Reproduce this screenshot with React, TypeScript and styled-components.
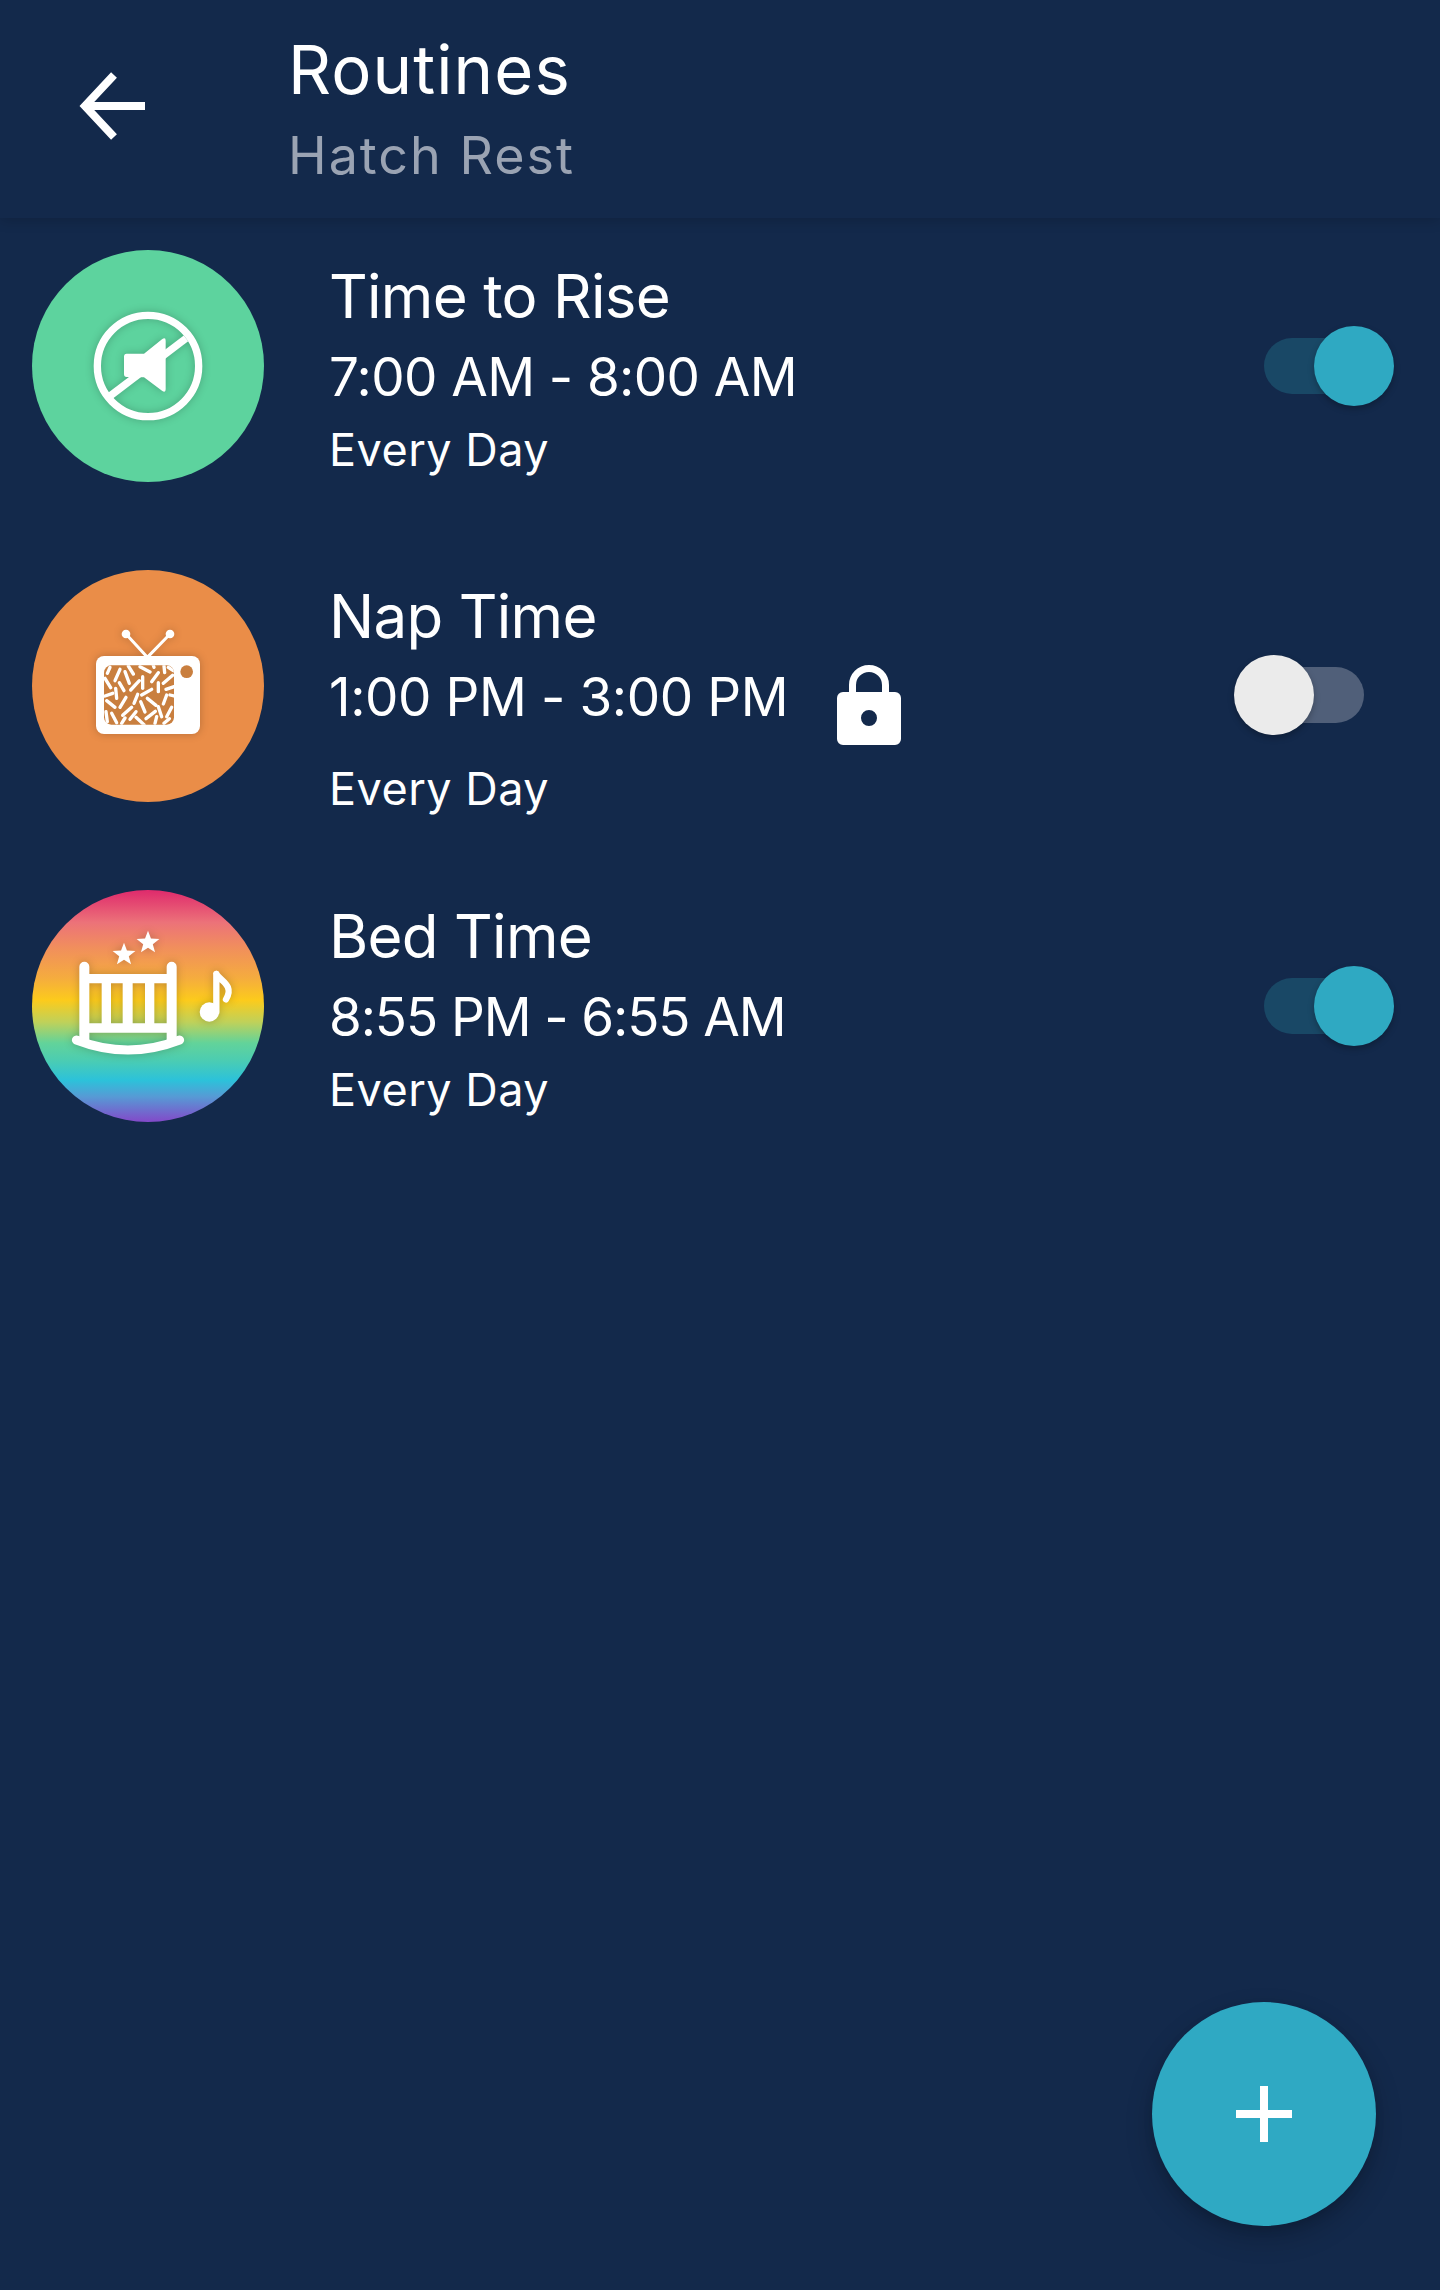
import React from 'react'
import styled, { createGlobalStyle } from 'styled-components'

const GlobalStyle = createGlobalStyle`
  html, body {
    margin: 0;
    padding: 0;
    background: #13294b;
  }
  * {
    box-sizing: border-box;
  }
`

const Screen = styled.div`
  position: relative;
  width: 1440px;
  height: 2290px;
  overflow: hidden;
  background: #13294b;
  color: #fff;
  font-family: Inter, "Open Sans", sans-serif;
`

const Header = styled.header`
  position: relative;
  display: flex;
  height: 218px;
  background: #13294b;
  box-shadow: 0 3px 12px rgba(0, 0, 0, 0.16);
`

const BackButton = styled.div`
  display: flex;
  flex: none;
  width: 288px;
  padding: 70px 0 0 78px;
`

const HeaderText = styled.div`
  display: flex;
  flex-direction: column;
  padding-top: 30px;
`

const Title = styled.div`
  font-size: 67px;
  line-height: 80px;
  letter-spacing: 1.1px;
`

const Subtitle = styled.div`
  margin-top: 11px;
  font-size: 52px;
  line-height: 70px;
  letter-spacing: 2px;
  color: #9aa3b3;
`

const List = styled.div`
  display: flex;
  flex-direction: column;
  margin-top: -12px;
`

const Row = styled.div`
  display: flex;
  align-items: center;
  height: 320px;
  padding-left: 32px;
`

const Avatar = styled.div<{ $bg: string }>`
  flex: none;
  width: 232px;
  height: 232px;
  border-radius: 50%;
  overflow: hidden;
  background: ${({ $bg }) => $bg};
  svg {
    display: block;
  }
`

const Info = styled.div`
  flex: none;
  align-self: flex-start;
  width: 935px;
  margin-left: 65px;
  padding-top: 52px;
`

const RoutineName = styled.div`
  margin-bottom: 3px;
  font-size: 60px;
  line-height: 76px;
  letter-spacing: -0.7px;
`

const TimeLine = styled.div<{ $locked: boolean; $tracking: number }>`
  display: flex;
  align-items: flex-start;
  height: ${({ $locked }) => ($locked ? '102px' : '83px')};
  font-size: 53px;
  line-height: 80px;
  letter-spacing: ${({ $tracking }) => $tracking}px;
`

const LockIcon = styled.svg`
  flex: none;
  margin: 8px 0 0 49px;
`

const Days = styled.div`
  font-size: 45px;
  line-height: 60px;
  letter-spacing: 0.5px;
`

const Toggle = styled.div<{ $nudge: number }>`
  position: relative;
  flex: none;
  width: 100px;
  height: 56px;
  margin-top: ${({ $nudge }) => $nudge}px;
`

const Track = styled.div<{ $on: boolean }>`
  width: 100%;
  height: 100%;
  border-radius: 28px;
  background: ${({ $on }) => ($on ? '#194866' : '#505f79')};
`

const Thumb = styled.div<{ $on: boolean }>`
  position: absolute;
  top: -12px;
  left: ${({ $on }) => ($on ? '50px' : '-30px')};
  width: 80px;
  height: 80px;
  border-radius: 50%;
  background: ${({ $on }) => ($on ? '#2fa9c2' : '#ebebeb')};
  box-shadow: 0 3px 6px rgba(0, 0, 0, 0.25);
`

const Fab = styled.div`
  position: absolute;
  right: 64px;
  bottom: 64px;
  display: flex;
  align-items: center;
  justify-content: center;
  width: 224px;
  height: 224px;
  border-radius: 50%;
  background: #2fa9c3;
  box-shadow: 0 12px 28px rgba(0, 0, 0, 0.2), 0 4px 10px rgba(0, 0, 0, 0.1);
`

const ICON_BOX = '36 30 696 696'
const glow = 'drop-shadow(0 0 12px rgba(0,0,0,0.22))'

const MuteIcon = () => (
  <svg width={232} height={232} viewBox={ICON_BOX}>
    <g fill="none" stroke="#fff" strokeWidth={22} style={{ filter: glow }}>
      <circle cx={384} cy={378} r={152} />
      <path d="M270 468L498 295" />
      <path
        d="M320 341H372L426 298Q437 290 437 302V448Q437 460 426 452L372 412L320 411Q312 411 312 402V350Q312 341 320 341Z"
        fill="#fff"
        stroke="none"
      />
    </g>
  </svg>
)

// static on the tv screen
const dashes = [
  [262, 340, 270, 322], [285, 362, 300, 328], [315, 335, 328, 370], [325, 318, 340, 342],
  [360, 320, 390, 336], [398, 310, 402, 322], [432, 318, 434, 338], [445, 322, 460, 332],
  [395, 365, 415, 338], [368, 350, 368, 385], [332, 390, 358, 362], [430, 370, 458, 346],
  [255, 355, 272, 383], [298, 368, 312, 392], [415, 368, 415, 395], [438, 388, 462, 380],
  [287, 385, 290, 415], [365, 405, 395, 388], [342, 430, 353, 403], [255, 408, 278, 400],
  [300, 442, 318, 412], [430, 432, 440, 405], [450, 405, 462, 408], [260, 422, 285, 442],
  [362, 425, 375, 456], [382, 415, 408, 436], [415, 440, 425, 470], [440, 470, 455, 442],
  [308, 466, 335, 442], [378, 476, 406, 454], [258, 455, 262, 485], [275, 460, 290, 488],
  [330, 478, 348, 455], [348, 472, 372, 494], [305, 490, 315, 474], [405, 490, 410, 470],
  [432, 490, 448, 476],
]

const TvIcon = () => (
  <svg width={232} height={232} viewBox={ICON_BOX}>
    <defs>
      <clipPath id="tv-screen">
        <rect x={252} y={316} width={210} height={178} rx={22} />
      </clipPath>
    </defs>
    <g style={{ filter: glow }}>
      <path d="M382 292L318 222M382 292L450 222" stroke="#fff" strokeWidth={9} fill="none" />
      <circle cx={318} cy={222} r={13} fill="#fff" />
      <circle cx={450} cy={222} r={13} fill="#fff" />
      <rect x={228} y={288} width={312} height={234} rx={24} fill="#fff" />
    </g>
    <rect x={252} y={316} width={210} height={178} rx={22} fill="#c97f3f" />
    <g clipPath="url(#tv-screen)" stroke="#fff" strokeWidth={10} strokeLinecap="round">
      {dashes.map(([x1, y1, x2, y2]) => (
        <line key={`${x1}-${y1}`} x1={x1} y1={y1} x2={x2} y2={y2} />
      ))}
    </g>
    <circle cx={500} cy={335} r={19} fill="#c97f3f" />
  </svg>
)

const starPoints = (cx: number, cy: number, r: number) =>
  Array.from({ length: 10 }, (_, i) => {
    const radius = i % 2 ? r * 0.42 : r
    const angle = (Math.PI / 5) * i - Math.PI / 2
    return `${cx + radius * Math.cos(angle)},${cy + radius * Math.sin(angle)}`
  }).join(' ')

const CribIcon = () => (
  <svg width={232} height={232} viewBox={ICON_BOX}>
    <g fill="#fff" style={{ filter: glow }}>
      <polygon points={starPoints(312, 224, 36)} />
      <polygon points={starPoints(384, 188, 36)} />
      <path d="M178 260a15 15 0 0 1 30 0V282H440V260a15 15 0 0 1 30 0V490H440V458H208V490H178Z
        M208 310V430H245V310ZM273 310V430H308V310ZM338 310V430H375V310ZM403 310V430H440V310Z" fillRule="evenodd" />
      <path d="M169 480Q324 540 479 480" fill="none" stroke="#fff" strokeWidth={27} strokeLinecap="round" />
      <circle cx={568} cy={396} r={29} />
      <path d="M589 282V396M589 282C600 302 644 316 618 358" fill="none" stroke="#fff" strokeWidth={19} strokeLinecap="round" />
    </g>
  </svg>
)

const PadLock = () => (
  <LockIcon width={64} height={80} viewBox="0 0 64 80">
    <path d="M15.5 30V20a16.5 16.5 0 0 1 33 0V30" fill="none" stroke="#fff" strokeWidth={7} />
    <path
      fillRule="evenodd"
      d="M6 27H58a6 6 0 0 1 6 6V74a6 6 0 0 1-6 6H6a6 6 0 0 1-6-6V33a6 6 0 0 1 6-6ZM32 45a8 8 0 1 0 0 16a8 8 0 1 0 0-16Z"
      fill="#fff"
    />
  </LockIcon>
)

const rainbow = `linear-gradient(180deg,
  #df2a6c 0%, #ec7279 14%, #f18f5c 25%, #f5ac3e 38%, #fccb1c 47.5%,
  #bfd15a 57%, #62d39a 66%, #4dcdb0 73%, #2cc2da 82%, #569bd5 89%, #8349c9 100%)`

type Routine = {
  name: string
  time: string
  tracking: number
  bg: string
  icon: React.ReactNode
  on: boolean
  locked?: boolean
}

const routines: Routine[] = [
  { name: 'Time to Rise', time: '7:00 AM - 8:00 AM', tracking: -0.6, bg: '#5dd39e', icon: <MuteIcon />, on: true },
  { name: 'Nap Time', time: '1:00 PM - 3:00 PM', tracking: -0.4, bg: '#ea8d48', icon: <TvIcon />, on: false, locked: true },
  { name: 'Bed Time', time: '8:55 PM - 6:55 AM', tracking: -1.1, bg: rainbow, icon: <CribIcon />, on: true },
]

const App: React.FC = () => (
  <Screen>
    <GlobalStyle />
    <Header>
      <BackButton>
        <svg width={70} height={72} viewBox="0 0 70 72" fill="none" stroke="#fff" strokeWidth={8}>
          <path d="M5 36H67M36 5L7 36L36 67" />
        </svg>
      </BackButton>
      <HeaderText>
        <Title>Routines</Title>
        <Subtitle>Hatch Rest</Subtitle>
      </HeaderText>
    </Header>
    <List>
      {routines.map((routine) => (
        <Row key={routine.name}>
          <Avatar $bg={routine.bg}>{routine.icon}</Avatar>
          <Info>
            <RoutineName>{routine.name}</RoutineName>
            <TimeLine $locked={!!routine.locked} $tracking={routine.tracking}>
              {routine.time}
              {routine.locked && <PadLock />}
            </TimeLine>
            <Days>Every Day</Days>
          </Info>
          <Toggle $nudge={routine.locked ? 18 : 0}>
            <Track $on={routine.on} />
            <Thumb $on={routine.on} />
          </Toggle>
        </Row>
      ))}
    </List>
    <Fab>
      <svg width={56} height={56} viewBox="0 0 56 56" fill="#fff">
        <path d="M24 0H32V24H56V32H32V56H24V32H0V24H24Z" />
      </svg>
    </Fab>
  </Screen>
)

export default App
